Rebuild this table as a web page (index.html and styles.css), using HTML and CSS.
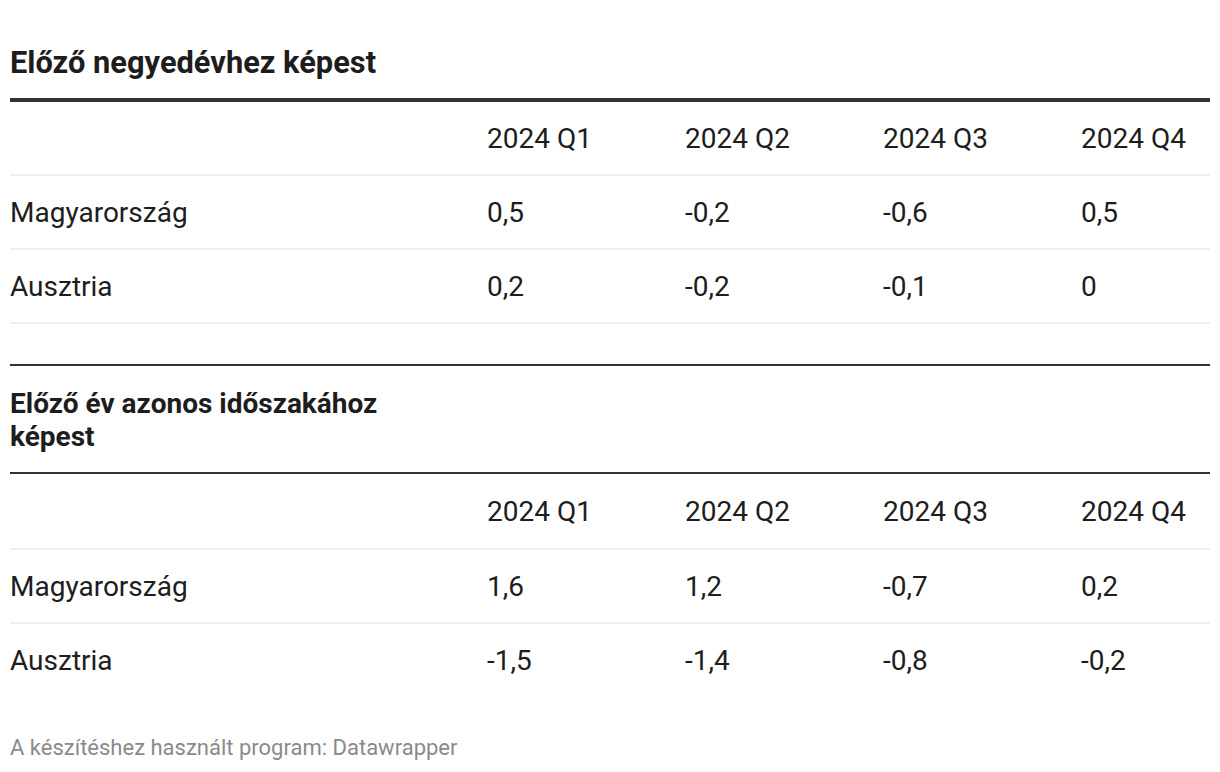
FILE: index.html
```html
<!DOCTYPE html>
<html lang="hu">
<head>
<meta charset="utf-8">
<title>Datawrapper táblázat</title>
<link rel="stylesheet" href="styles.css">
</head>
<body>
<main class="page">
  <section class="block">
    <h2 class="title">Előző negyedévhez képest</h2>
    <table class="data thick">
      <colgroup><col class="c-name"><col class="c-q"><col class="c-q"><col class="c-q"><col class="c-last"></colgroup>
      <thead>
        <tr><th></th><th>2024 Q1</th><th>2024 Q2</th><th>2024 Q3</th><th>2024 Q4</th></tr>
      </thead>
      <tbody>
        <tr><td>Magyarország</td><td>0,5</td><td>-0,2</td><td>-0,6</td><td>0,5</td></tr>
        <tr><td>Ausztria</td><td>0,2</td><td>-0,2</td><td>-0,1</td><td>0</td></tr>
      </tbody>
    </table>
  </section>
  <section class="block second">
    <h2 class="title narrow">Előző év azonos időszakához képest</h2>
    <table class="data thin nolast">
      <colgroup><col class="c-name"><col class="c-q"><col class="c-q"><col class="c-q"><col class="c-last"></colgroup>
      <thead>
        <tr><th></th><th>2024 Q1</th><th>2024 Q2</th><th>2024 Q3</th><th>2024 Q4</th></tr>
      </thead>
      <tbody>
        <tr><td>Magyarország</td><td>1,6</td><td>1,2</td><td>-0,7</td><td>0,2</td></tr>
        <tr><td>Ausztria</td><td>-1,5</td><td>-1,4</td><td>-0,8</td><td>-0,2</td></tr>
      </tbody>
    </table>
  </section>
  <footer class="credit">A készítéshez használt program: Datawrapper</footer>
</main>
</body>
</html>
```

FILE: styles.css
```css
html, body {
  margin: 0;
  padding: 0;
  background: #ffffff;
}
body {
  font-family: Roboto, "Liberation Sans", Arial, sans-serif;
  color: #1d1d1d;
}
.page {
  width: 1200px;
  padding: 46px 10px 0 10px;
}
.title {
  margin: 0;
  font-size: 30.8px;
  font-weight: 700;
  line-height: 33px;
  padding-bottom: 19px;
  color: #1d1d1d;
}
.title.narrow {
  font-size: 28px;
  max-width: 420px;
}
.second {
  margin-top: 40px;
  border-top: 2px solid #333333;
  padding-top: 21px;
}
.data {
  width: 100%;
  border-collapse: collapse;
  table-layout: fixed;
  font-size: 28px;
}
.c-name { width: 477px; }
.c-q { width: 198px; }
.c-last { width: auto; }
.data.thick thead tr { border-top: 4px solid #333333; }
.data.thin thead tr { border-top: 2px solid #333333; }
.data th, .data td {
  padding: 0;
  height: 72px;
  text-align: left;
  font-weight: 400;
  vertical-align: middle;
}
.data.thin th { height: 74px; }
.data tr {
  border-bottom: 2px solid #eeeeee;
}
.data.nolast tbody tr:last-child {
  border-bottom: 0;
}
.credit {
  margin-top: 37px;
  font-size: 22px;
  line-height: 30px;
  color: #8a8a8a;
}
```
